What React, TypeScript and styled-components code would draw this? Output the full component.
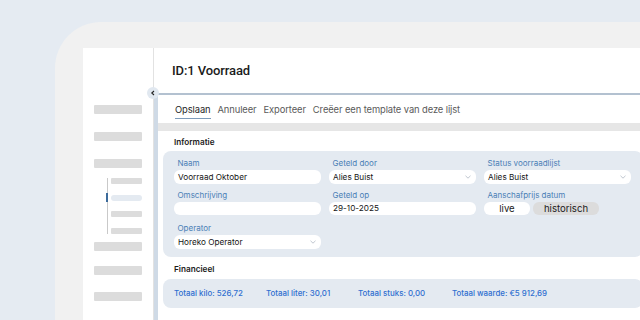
import React from "react";
import styled, { createGlobalStyle } from "styled-components";

const Global = createGlobalStyle`
  html, body { margin: 0; padding: 0; background: #e5ebf2; overflow: hidden; }
  body { font-family: Inter, "Noto Sans", sans-serif; -webkit-font-smoothing: antialiased; }
  * { box-sizing: border-box; }
`;

const Page = styled.div`
  width: 640px;
  height: 320px;
  overflow: hidden;
  padding: 22px 0 0 55px;
  background: #e5ebf2;
`;

const Frame = styled.div`
  width: 700px;
  height: 298px;
  background: #f1f1f1;
  border-top-left-radius: 46px;
  padding: 26px 0 0 28px;
`;

const Window = styled.div`
  position: relative;
  display: flex;
  width: 620px;
  height: 272px;
  background: #ffffff;
`;

const Sidebar = styled.div`
  width: 71px;
  flex: none;
  border-right: 1px solid #e2e2e2;
  padding: 57px 0 0 11px;
  display: flex;
  flex-direction: column;
`;

const NavBar = styled.div<{ $mt?: number }>`
  width: 48px;
  height: 9px;
  border-radius: 1px;
  background: #dcdcdc;
  margin-top: ${(p) => p.$mt ?? 0}px;
`;

const NavGroup = styled.div`
  margin: 10px 0 0 13px;
  border-left: 1px solid #c9c9c9;
  padding-left: 3px;
  display: flex;
  flex-direction: column;
  gap: 10.7px;
`;

const SubItem = styled.div<{ $active?: boolean }>`
  position: relative;
  width: 31px;
  height: 6px;
  border-radius: ${(p) => (p.$active ? 3 : 1)}px;
  background: ${(p) => (p.$active ? "#e4eaf1" : "#dcdcdc")};
`;

const Indicator = styled.span`
  position: absolute;
  left: -5px;
  top: -2px;
  width: 2px;
  height: 9px;
  background: #3c6b9b;
`;

const Main = styled.div`
  flex: 1;
  display: flex;
  flex-direction: column;
  min-width: 0;
`;

const Header = styled.div`
  height: 45px;
  display: flex;
  align-items: center;
  padding-left: 18px;
`;

const Title = styled.div`
  font-family: Roboto, "Noto Sans", sans-serif;
  font-size: 13px;
  font-weight: 500;
  color: #1b1b1b;
  letter-spacing: -0.1px;
`;

const Collapse = styled.div`
  position: absolute;
  left: 64px;
  top: 39px;
  width: 12px;
  height: 12px;
  border-radius: 50%;
  background: #e1e8f0;
  display: flex;
  align-items: center;
  justify-content: center;
`;

const Body = styled.div`
  flex: 1;
  border-left: 4px solid #cfdae6;
  border-top: 2px solid #b3c1d0;
  display: flex;
  flex-direction: column;
`;

const Toolbar = styled.div`
  height: 28px;
  display: flex;
  align-items: flex-start;
  gap: 7px;
  padding: 8px 0 0 17px;
`;

const Tab = styled.span<{ $active?: boolean }>`
  font-size: 9.4px;
  line-height: 14px;
  padding-bottom: 1px;
  letter-spacing: -0.1px;
  color: ${(p) => (p.$active ? "#1f1f1f" : "#5a5a5a")};
  border-bottom: 1.5px solid ${(p) => (p.$active ? "#7d9bba" : "transparent")};
`;

const Strip = styled.div`
  height: 8px;
  background: #e6e6e6;
`;

const Content = styled.div`
  padding-left: 5px;
  display: flex;
  flex-direction: column;
`;

const SectionTitle = styled.div<{ $h: number; $pt: number }>`
  height: ${(p) => p.$h}px;
  padding: ${(p) => p.$pt}px 0 0 11px;
  font-size: 8.2px;
  line-height: 12px;
  font-weight: 600;
  color: #1b1b1b;
`;

const Panel = styled.div`
  width: 480px;
  background: #e4eaf1;
  border-radius: 8px;
  padding: 7px 11px 8px;
  display: grid;
  grid-template-columns: repeat(3, 147px);
  column-gap: 8px;
  row-gap: 6px;
`;

const Field = styled.div<{ $mt?: number }>`
  display: flex;
  flex-direction: column;
  gap: 2px;
  margin-top: ${(p) => p.$mt ?? 0}px;
`;

const Label = styled.label`
  font-size: 8px;
  line-height: 10px;
  padding-left: 3.5px;
  color: #4a80b6;
`;

const Input = styled.div`
  height: 13.5px;
  border-radius: 6px;
  background: #ffffff;
  padding: 0 5px 0 4px;
  display: flex;
  align-items: center;
  justify-content: space-between;
  font-size: 8.2px;
  color: #151515;
`;

const Segments = styled.div`
  display: flex;
  gap: 3px;
`;

const Segment = styled.div<{ $w: number; $on?: boolean }>`
  width: ${(p) => p.$w}px;
  height: 13.5px;
  border-radius: 6px;
  background: ${(p) => (p.$on ? "#dcdcdc" : "#ffffff")};
  display: flex;
  align-items: center;
  justify-content: center;
  font-size: 9.6px;
  color: #1b1b1b;
`;

const Totals = styled.div`
  width: 480px;
  height: 29px;
  background: #e4eaf1;
  border-radius: 8px;
  padding-left: 11px;
  display: grid;
  grid-template-columns: 92px 92px 94px auto;
  align-items: center;
`;

const Total = styled.span`
  font-size: 7.9px;
  font-weight: 500;
  color: #2f6fd0;
  white-space: nowrap;
`;

const Chevron = () => (
  <svg width="6" height="4" viewBox="0 0 6 4">
    <polyline points="0.5,0.8 3,3.2 5.5,0.8" fill="none" stroke="#aeb8c3" strokeWidth="0.8" />
  </svg>
);

export default function App() {
  return (
    <>
      <Global />
      <Page>
        <Frame>
          <Window>
            <Sidebar>
              <NavBar />
              <NavBar $mt={18} />
              <NavBar $mt={18} />
              <NavGroup>
                <SubItem />
                <SubItem $active>
                  <Indicator />
                </SubItem>
                <SubItem />
                <SubItem />
              </NavGroup>
              <NavBar $mt={8} />
              <NavBar $mt={15} />
              <NavBar $mt={17} />
            </Sidebar>
            <Collapse>
              <svg width="6" height="6" viewBox="0 0 6 6">
                <polyline points="4,1 1.8,3 4,5" fill="none" stroke="#222" strokeWidth="1.1" />
              </svg>
            </Collapse>
            <Main>
              <Header>
                <Title>ID:1 Voorraad</Title>
              </Header>
              <Body>
                <Toolbar>
                  <Tab $active>Opslaan</Tab>
                  <Tab>Annuleer</Tab>
                  <Tab>Exporteer</Tab>
                  <Tab>Creëer een template van deze lijst</Tab>
                </Toolbar>
                <Strip />
                <Content>
                  <SectionTitle $h={20} $pt={5}>Informatie</SectionTitle>
                  <Panel>
                    <Field>
                      <Label>Naam</Label>
                      <Input>Voorraad Oktober</Input>
                    </Field>
                    <Field>
                      <Label>Geteld door</Label>
                      <Input>
                        Alies Buist
                        <Chevron />
                      </Input>
                    </Field>
                    <Field>
                      <Label>Status voorraadlijst</Label>
                      <Input>
                        Alies Buist
                        <Chevron />
                      </Input>
                    </Field>
                    <Field>
                      <Label>Omschrijving</Label>
                      <Input />
                    </Field>
                    <Field>
                      <Label>Geteld op</Label>
                      <Input>29-10-2025</Input>
                    </Field>
                    <Field>
                      <Label>Aanschafprijs datum</Label>
                      <Segments>
                        <Segment $w={46}>live</Segment>
                        <Segment $w={66} $on>historisch</Segment>
                      </Segments>
                    </Field>
                    <Field $mt={2}>
                      <Label>Operator</Label>
                      <Input>
                        Horeko Operator
                        <Chevron />
                      </Input>
                    </Field>
                  </Panel>
                  <SectionTitle $h={22} $pt={6}>Financieel</SectionTitle>
                  <Totals>
                    <Total>Totaal kilo: 526,72</Total>
                    <Total>Totaal liter: 30,01</Total>
                    <Total>Totaal stuks: 0,00</Total>
                    <Total>Totaal waarde: €5 912,69</Total>
                  </Totals>
                </Content>
              </Body>
            </Main>
          </Window>
        </Frame>
      </Page>
    </>
  );
}
